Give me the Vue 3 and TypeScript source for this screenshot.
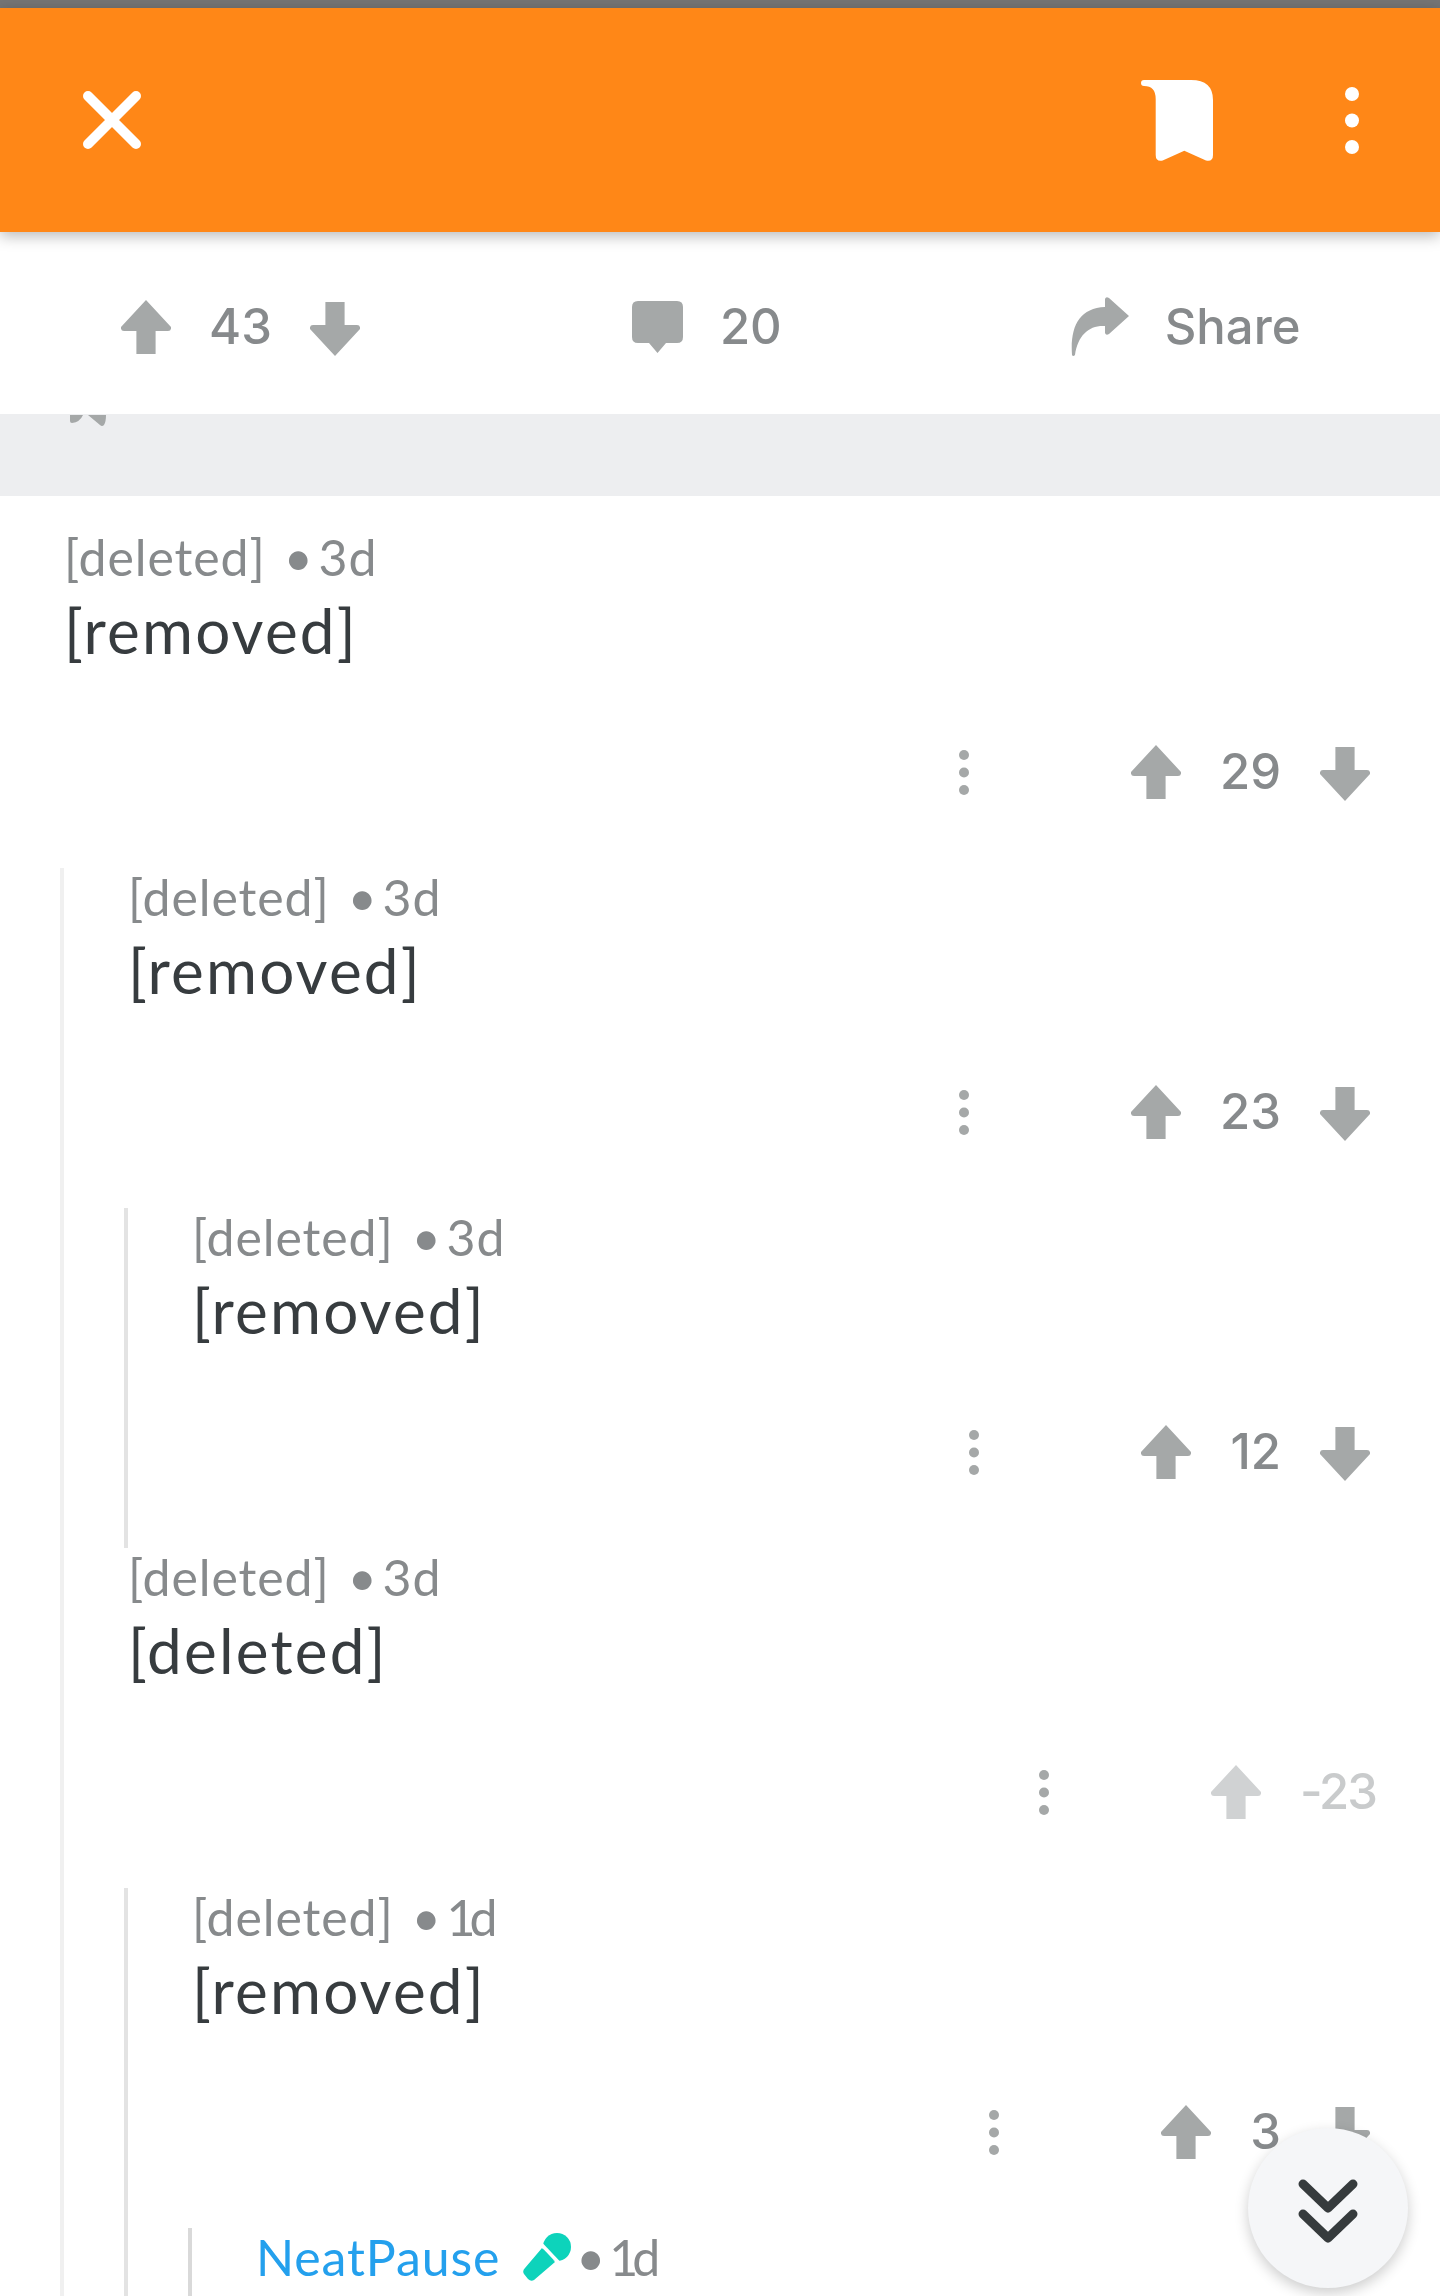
<script setup lang="ts">
interface Comment {
  author: string
  age: string
  body: string
  score: string
  guides: string[]
  faded?: boolean
  mic?: boolean
  hideActions?: boolean
}

const g1 = '#f0f0f0'
const g2 = '#e3e3e3'
const g3 = '#d9d9d9'

const comments: Comment[] = [
  { author: '[deleted]', age: '3d', body: '[removed]', score: '29', guides: [] },
  { author: '[deleted]', age: '3d', body: '[removed]', score: '23', guides: [g1] },
  { author: '[deleted]', age: '3d', body: '[removed]', score: '12', guides: [g1, g2] },
  { author: '[deleted]', age: '3d', body: '[deleted]', score: '-23', guides: [g1], faded: true },
  { author: '[deleted]', age: '1d', body: '[removed]', score: '3', guides: [g1, g2] },
  { author: 'NeatPause', age: '1d', body: '', score: '', guides: [g1, g2, g3], mic: true, hideActions: true },
]

const arrow = 'M25 0 L50 27 Q50.5 31 47 31 H34.6 V54 H15.4 V31 H3 Q-0.5 31 0 27 Z'
</script>

<template>
  <div class="page">
    <div class="status-bar"></div>
    <header class="topbar">
      <svg class="close" width="58" height="58" viewBox="0 0 58 58">
        <path d="M5 5 L53 53 M53 5 L5 53" stroke="#fff" stroke-width="10" stroke-linecap="round" fill="none" />
      </svg>
      <svg class="bookmark" width="72" height="81" viewBox="0 0 72 81">
        <path
          d="M3 0 H50 Q72 0 72 20 V75 Q72 82 65 80.5 L43.3 70.7 L21.7 80.5 Q14.7 82 14.7 75 V19 Q14.7 6 3 6 Q0 6 0 3 Q0 0 3 0 Z"
          fill="#fff"
        />
      </svg>
      <svg class="more" width="14" height="67" viewBox="0 0 14 67">
        <circle cx="7" cy="7" r="7" fill="#fff" />
        <circle cx="7" cy="33.5" r="7" fill="#fff" />
        <circle cx="7" cy="60" r="7" fill="#fff" />
      </svg>
    </header>

    <div class="post-actions">
      <div class="post-votes">
        <svg class="arrow" width="50" height="54" viewBox="0 0 50 54"><path :d="arrow" /></svg>
        <span class="count">43</span>
        <svg class="arrow down" width="50" height="54" viewBox="0 0 50 54"><path :d="arrow" /></svg>
      </div>
      <div class="post-comments">
        <svg width="51" height="52" viewBox="0 0 51 52">
          <path
            d="M6 0 H45 Q51 0 51 6 V36 Q51 42 45 42 H34 L25.5 52 L17 42 H6 Q0 42 0 36 V6 Q0 0 6 0 Z"
            fill="#a5a8a8"
          />
        </svg>
        <span class="count">20</span>
      </div>
      <div class="post-share">
        <svg width="58" height="60" viewBox="0 0 58 60">
          <path
            d="M34 2 Q35 -1 38 1 L58 19 L38 37 Q35 39 34 36 V29 C18 28 7 38 4 58 Q2 60 1 58 C-1 30 8 11 34 10 Z"
            fill="#a5a8a8"
          />
        </svg>
        <span class="count">Share</span>
      </div>
    </div>

    <div class="band">
      <svg class="peek" width="36" height="13" viewBox="0 0 36 13">
        <path d="M0 1 H13 Q10 8 2 9 Q0 9 0 7 Z M18 1 H36 Q36 8 34 11 Q32 13 30 11 Z" fill="#a5a8a8" />
      </svg>
    </div>

    <div class="comments">
      <div v-for="(c, i) in comments" :key="i" class="comment">
        <span v-for="(color, j) in c.guides" :key="j" class="guide" :style="{ borderLeftColor: color }"></span>
        <div class="comment-main">
          <div class="meta">
            <span :class="c.mic ? 'author-link' : ''">{{ c.author }}</span>
            <svg v-if="c.mic" class="mic" width="48" height="48" viewBox="0 0 48 48">
              <circle cx="34" cy="14" r="14" fill="#0dd3bb" />
              <path d="M19 15 L32 29 L11 47 Q8 49 5 46 L1 41 Q-1 38 2 35 Z" fill="#0dd3bb" />
              <path d="M19 12 L36 30" stroke="#fff" stroke-width="3.5" />
            </svg>
            <span class="bullet" :class="{ tight: c.mic }">•</span>
            <span :class="{ 'age-one': c.age.startsWith('1') }">{{ c.age }}</span>
          </div>
          <div class="body">{{ c.body }}</div>
          <div v-if="!c.hideActions" class="actions" :class="{ faded: c.faded }">
            <svg class="dots" width="10" height="45" viewBox="0 0 10 45">
              <circle cx="5" cy="5" r="5" />
              <circle cx="5" cy="22.5" r="5" />
              <circle cx="5" cy="40" r="5" />
            </svg>
            <svg class="arrow" width="50" height="54" viewBox="0 0 50 54"><path :d="arrow" /></svg>
            <span class="count">{{ c.score }}</span>
            <svg v-if="!c.faded" class="arrow down" width="50" height="54" viewBox="0 0 50 54"><path :d="arrow" /></svg>
          </div>
        </div>
      </div>
    </div>

    <button class="fab">
      <svg width="60" height="66" viewBox="0 0 60 66">
        <path
          d="M5 5 L30 29 L55 5 M5 35 L30 59 L55 35"
          stroke="#363b3d"
          stroke-width="9"
          stroke-linecap="round"
          stroke-linejoin="round"
          fill="none"
        />
      </svg>
    </button>
  </div>
</template>

<style>
html,
body {
  margin: 0;
  background: #fff;
  overflow: hidden;
}
</style>

<style scoped>
.page {
  position: relative;
  width: 1440px;
  height: 2296px;
  overflow: hidden;
  background: #fff;
  font-family: 'Lato', 'Liberation Sans', sans-serif;
}

.status-bar {
  height: 8px;
  background: #757575;
}

.topbar {
  position: relative;
  z-index: 2;
  display: flex;
  align-items: center;
  height: 224px;
  padding: 0 81px 0 83px;
  box-sizing: border-box;
  background: #ff8717;
  box-shadow: 0 4px 14px rgba(0, 0, 0, 0.28);
}

.bookmark {
  margin-left: auto;
  margin-right: 132px;
}

.post-actions {
  display: flex;
  align-items: center;
  height: 182px;
  padding: 8px 0 0 121px;
  box-sizing: border-box;
}

.post-votes,
.post-comments,
.post-share {
  display: flex;
  align-items: center;
}

.post-votes {
  gap: 38px;
}

.post-comments {
  gap: 37px;
  margin-left: 272px;
}

.post-share {
  gap: 36px;
  margin-left: 289px;
}

.count {
  margin-top: -2px;
  font-family: 'Inter', 'Liberation Sans', sans-serif;
  font-size: 49px;
  font-weight: 500;
  line-height: 1;
  color: #878a8c;
}

.arrow path {
  fill: #a5a8a8;
}

.arrow.down {
  transform: translateY(2px) scaleY(-1);
}

.band {
  height: 82px;
  background: #edeef0;
}

.peek {
  display: block;
  margin-left: 70px;
}

.comments {
  padding-top: 32px;
}

.comment {
  display: flex;
  height: 340px;
  padding-left: 60px;
  overflow: hidden;
}

.guide {
  flex: none;
  width: 64px;
  box-sizing: border-box;
  border-left: 4px solid #f0f0f0;
}

.comment-main {
  flex: 1;
  min-width: 0;
  padding-left: 4px;
}

.meta {
  display: flex;
  align-items: center;
  height: 58px;
  margin-bottom: 2px;
  font-size: 50px;
  letter-spacing: 0.9px;
  color: #878a8c;
}

.author-link {
  color: #24a0ed;
}

.mic {
  margin-left: 23px;
}

.bullet {
  margin: 0 5px 0 18px;
}

.bullet.tight {
  margin: 0 3px 0 5px;
}

.age-one {
  letter-spacing: -6px;
}

.body {
  height: 88px;
  font-size: 62px;
  line-height: 84px;
  letter-spacing: 2.2px;
  color: #373c3f;
}

.actions {
  display: flex;
  align-items: center;
  justify-content: flex-end;
  gap: 39px;
  height: 80px;
  margin-top: 56px;
  padding-right: 70px;
}

.dots {
  margin-right: 123px;
  fill: #a5a8a8;
}

.actions.faded {
  padding-right: 64px;
}

.actions.faded .count {
  letter-spacing: -2px;
  color: #c9cbcc;
}

.actions.faded .arrow path {
  fill: #d0d2d3;
}

.fab {
  position: absolute;
  left: 1248px;
  top: 2128px;
  display: flex;
  align-items: center;
  justify-content: center;
  width: 160px;
  height: 160px;
  padding: 8px 0 0;
  border: none;
  border-radius: 50%;
  background: #f5f6f8;
  box-shadow: 0 5px 14px rgba(0, 0, 0, 0.2);
}
</style>
